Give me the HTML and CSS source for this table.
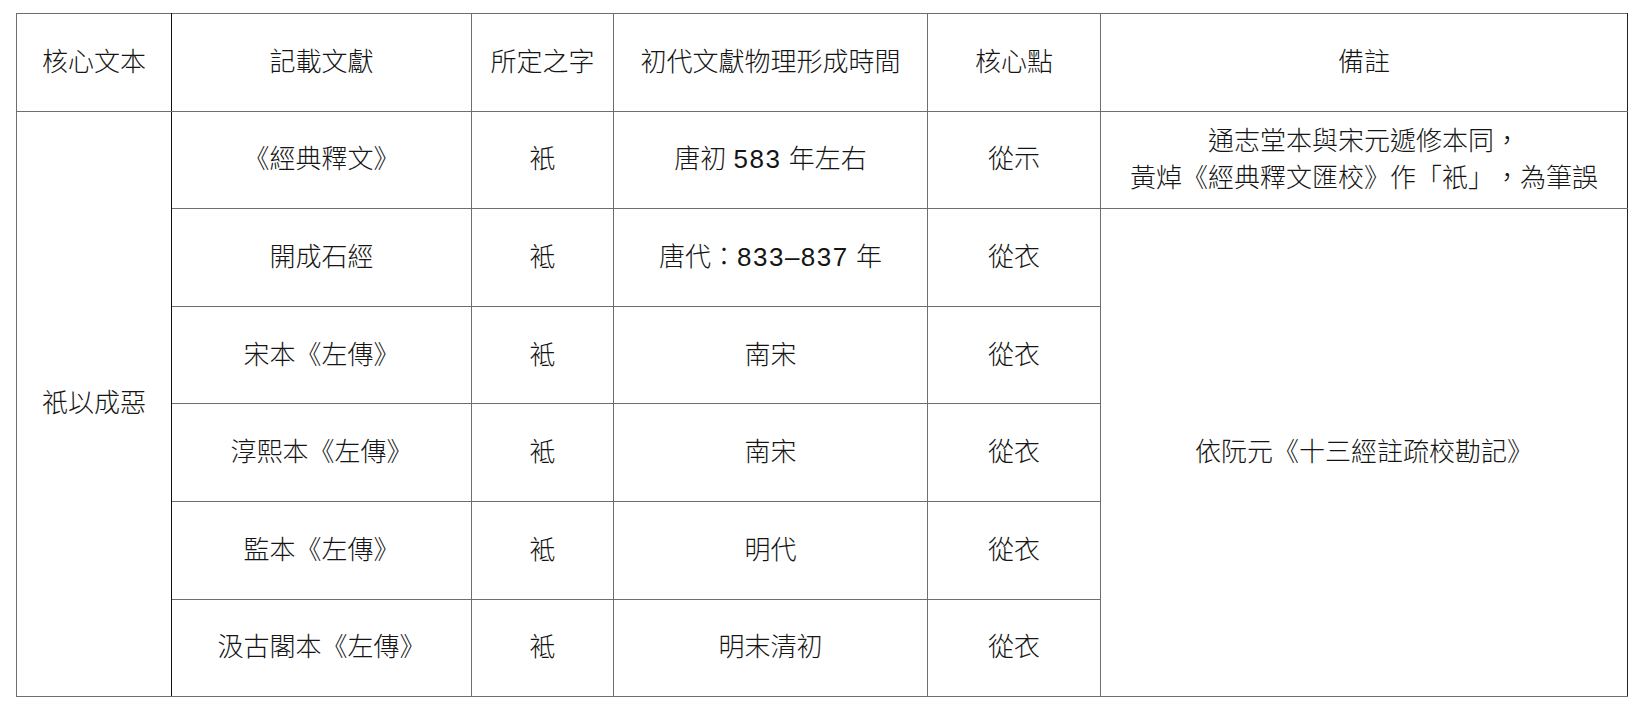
FILE: index.html
```html
<!DOCTYPE html>
<html lang="zh-Hant">
<head>
<meta charset="utf-8">
<title>祇以成惡</title>
<link rel="stylesheet" href="styles.css">
</head>
<body>
<table class="grid">
  <colgroup>
    <col class="c1"><col class="c2"><col class="c3"><col class="c4"><col class="c5"><col class="c6">
  </colgroup>
  <tr>
    <td class="first">核心文本</td>
    <td>記載文獻</td>
    <td>所定之字</td>
    <td>初代文獻物理形成時間</td>
    <td>核心點</td>
    <td class="last">備註</td>
  </tr>
  <tr>
    <td class="first" rowspan="6">祇以成惡</td>
    <td>《經典釋文》</td>
    <td>衹</td>
    <td>唐初 <span class="num">583</span> 年左右</td>
    <td>從示</td>
    <td class="last note">通志堂本與宋元遞修本同，<br>黃焯《經典釋文匯校》作「衹」，為筆誤</td>
  </tr>
  <tr>
    <td>開成石經</td>
    <td>袛</td>
    <td>唐代：<span class="num">833–837</span> 年</td>
    <td>從衣</td>
    <td class="last" rowspan="5">依阮元《十三經註疏校勘記》</td>
  </tr>
  <tr>
    <td>宋本《左傳》</td>
    <td>袛</td>
    <td>南宋</td>
    <td>從衣</td>
  </tr>
  <tr>
    <td>淳熙本《左傳》</td>
    <td>袛</td>
    <td>南宋</td>
    <td>從衣</td>
  </tr>
  <tr>
    <td>監本《左傳》</td>
    <td>袛</td>
    <td>明代</td>
    <td>從衣</td>
  </tr>
  <tr>
    <td>汲古閣本《左傳》</td>
    <td>袛</td>
    <td>明末清初</td>
    <td>從衣</td>
  </tr>
</table>
</body>
</html>
```

FILE: styles.css
```css
html, body {
  margin: 0;
  padding: 0;
  background: #ffffff;
}

body {
  padding: 13px 0 0 16px;
  font-family: "Liberation Sans", "Noto Sans CJK TC", sans-serif;
  color: #151515;
}

.grid {
  border-collapse: collapse;
  table-layout: fixed;
  width: 1611px;
  font-size: 26px;
  font-weight: 300;
  text-spacing-trim: space-all;
}

.c1 { width: 155px; }
.c2 { width: 300px; }
.c3 { width: 142px; }
.c4 { width: 314px; }
.c5 { width: 173px; }
.c6 { width: 527px; }

.grid tr {
  height: 97.6px;
}

.grid td {
  border: 1px solid #6e6e6e;
  text-align: center;
  vertical-align: middle;
  padding: 0;
  line-height: 37px;
  white-space: nowrap;
}

.grid td.first {
  border-right-color: #111111;
}

.grid td.last {
  border-right-color: #222222;
}

.num {
  font-weight: 400;
  letter-spacing: 1.5px;
}
```
